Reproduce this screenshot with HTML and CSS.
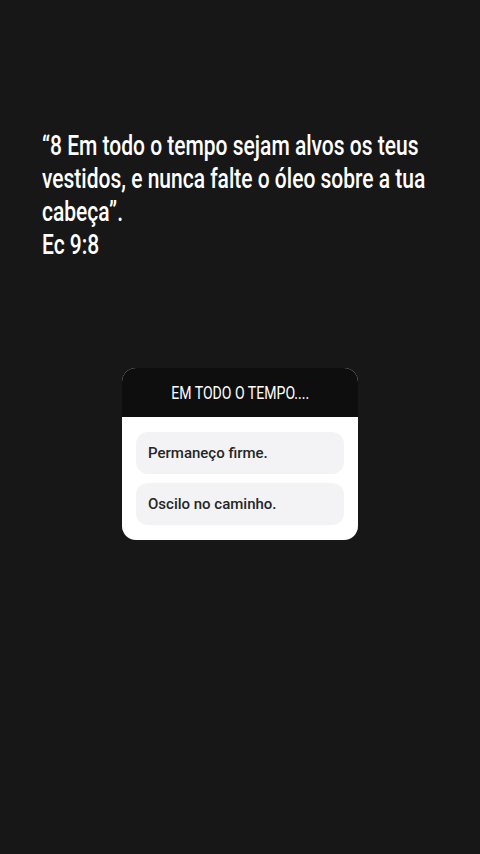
FILE: index.html
```html
<!DOCTYPE html>
<html lang="pt">
<head>
<meta charset="utf-8">
<link rel="stylesheet" href="styles.css">
</head>
<body>
<main class="story">
  <div class="quote-wrap">
    <p class="quote">“8 Em todo o tempo sejam alvos os teus vestidos, e nunca falte o óleo sobre a tua cabeça”.<br>Ec 9:8</p>
  </div>
  <section class="poll">
    <header class="poll-head"><span class="poll-title">EM TODO O TEMPO....</span></header>
    <div class="poll-body">
      <div class="option">Permaneço firme.</div>
      <div class="option">Oscilo no caminho.</div>
    </div>
  </section>
</main>
</body>
</html>
```

FILE: styles.css
```css
html, body {
  margin: 0;
  padding: 0;
  background: #171717;
}
.story {
  width: 480px;
  height: 854px;
  display: flex;
  flex-direction: column;
  padding-top: 129px;
  box-sizing: border-box;
  overflow: hidden;
}
.quote-wrap {
  margin-left: 42px;
  width: 400px;
}
.quote {
  margin: 0;
  width: 535px;
  transform: scaleX(0.75);
  transform-origin: left top;
  color: #ffffff;
  font-family: "Roboto", "DejaVu Sans Condensed", sans-serif;
  font-weight: 500;
  font-size: 28px;
  line-height: 33px;
}
.poll {
  margin: 107px auto 0;
  width: 236px;
  border-radius: 14px;
  overflow: hidden;
  background: #ffffff;
}
.poll-head {
  background: #0e0e0e;
  height: 49px;
  display: flex;
  align-items: center;
  justify-content: center;
  color: #ffffff;
  font-family: "Roboto", "DejaVu Sans Condensed", sans-serif;
  font-weight: 400;
  font-size: 19px;
}
.poll-title {
  display: inline-block;
  transform: scaleX(0.74);
}
.poll-body {
  padding: 15px 14px 15px;
  display: flex;
  flex-direction: column;
  gap: 9px;
}
.option {
  height: 42px;
  border-radius: 12px;
  background: #f3f3f6;
  display: flex;
  align-items: center;
  padding-left: 12px;
  color: #262626;
  font-family: "Roboto", "Liberation Sans", sans-serif;
  font-weight: 500;
  font-size: 15px;
}
```
